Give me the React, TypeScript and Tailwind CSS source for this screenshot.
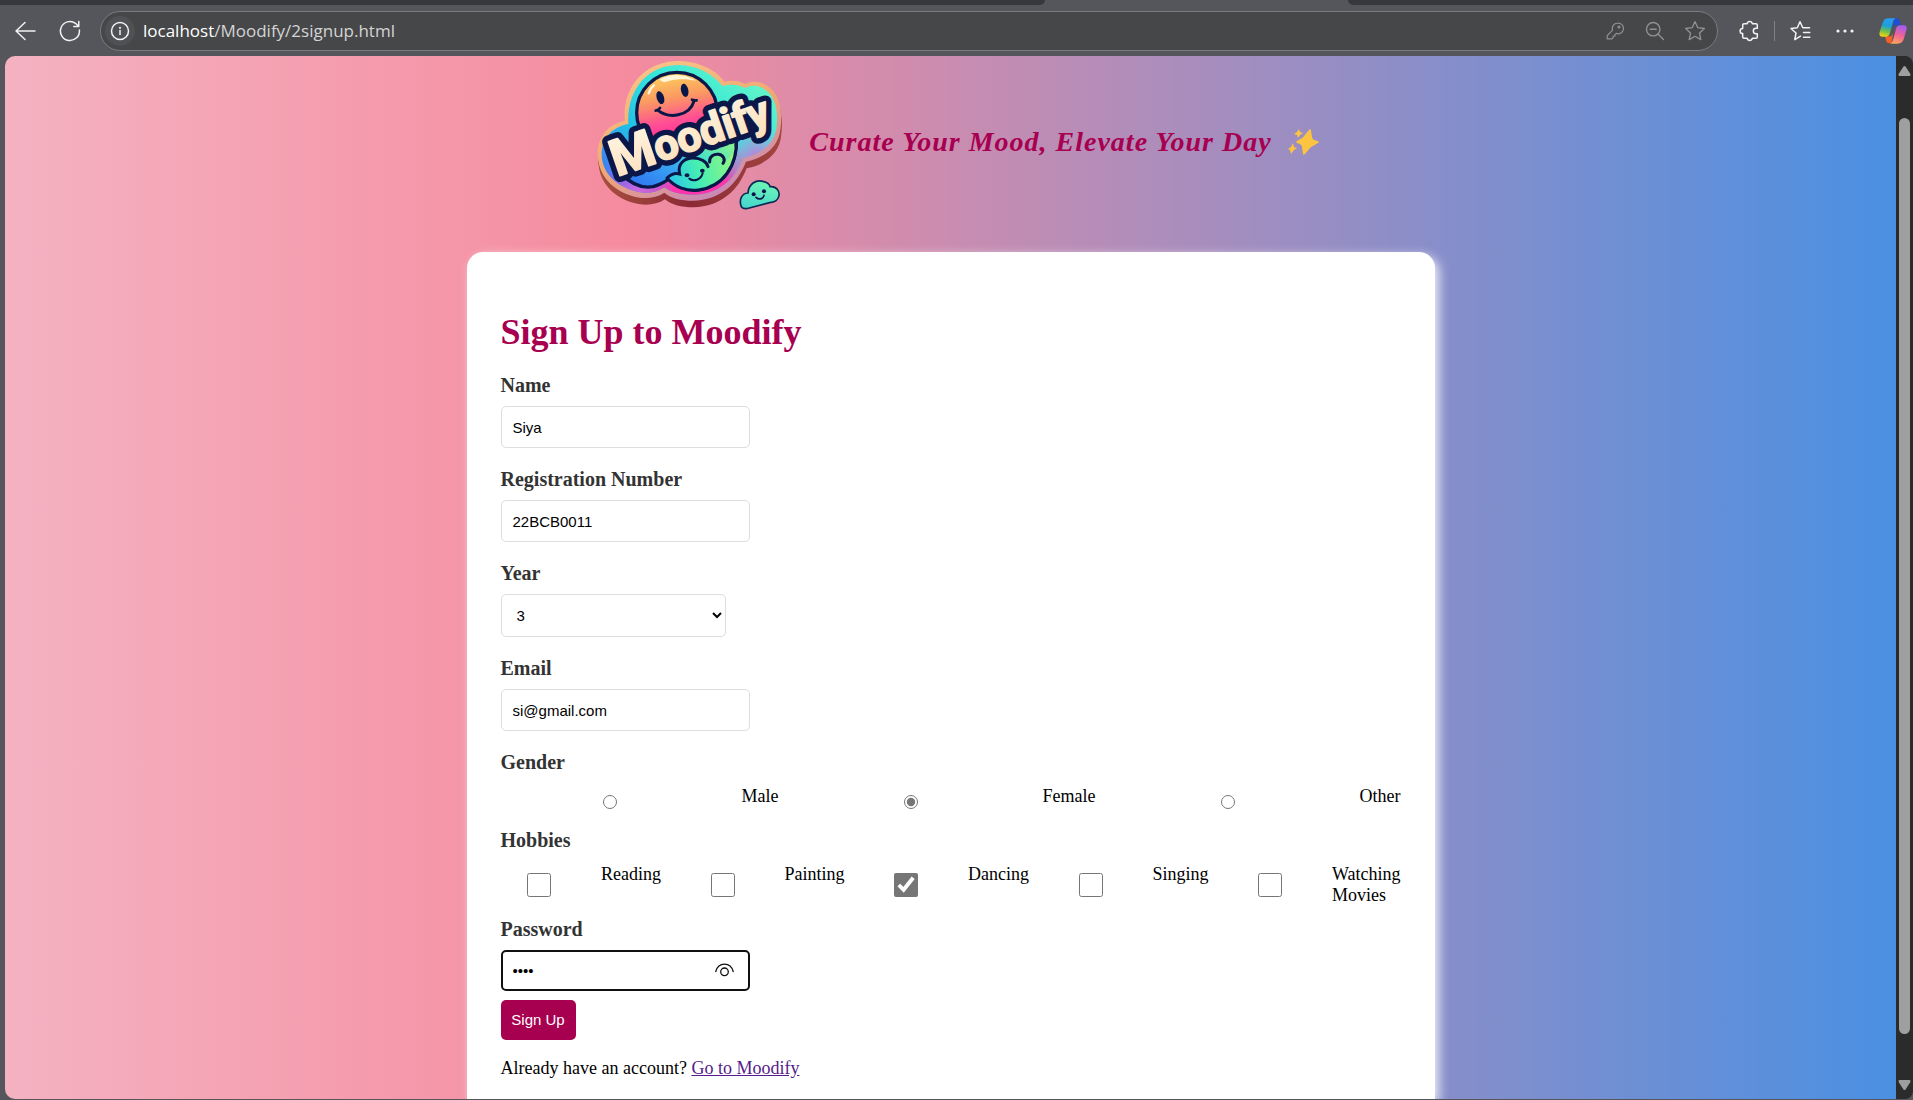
import React from "react";

function MoodifyLogo() {
  const outline =
    "M130 213C125 110 190 33 295 33C360 35 410 65 430 95C455 90 475 92 492 102C520 88 550 97 572 118C598 145 605 190 598 240C592 290 550 325 495 335C470 400 420 450 335 452C300 452 270 445 250 428C225 445 190 448 160 440C100 425 50 380 50 310C50 260 85 220 130 213Z";
  const inner =
    "M142 222C137 118 200 45 294 45C352 46 400 76 424 108C450 101 474 104 492 114C518 100 544 110 562 127C586 152 592 192 586 236C578 282 540 314 486 324C462 390 412 434 335 434C302 434 272 428 250 412C222 430 192 432 164 424C108 408 62 370 62 312C62 266 94 230 142 222Z";
  return (
    <svg viewBox="0 18 660 492" className="h-[164px] w-[220px] shrink-0" role="img" aria-label="Moodify logo">
      <defs>
        <linearGradient id="rim" x1="0" y1="0" x2="0.6" y2="1">
          <stop offset="0" stopColor="#fbcb8c" />
          <stop offset="0.6" stopColor="#f0a873" />
          <stop offset="1" stopColor="#c987b8" />
        </linearGradient>
        <linearGradient id="side" x1="0" y1="0" x2="1" y2="0">
          <stop offset="0" stopColor="#a8503f" />
          <stop offset="0.5" stopColor="#8b2a35" />
          <stop offset="1" stopColor="#a2463f" />
        </linearGradient>
        <linearGradient id="base" x1="0.1" y1="0.9" x2="0.9" y2="0.1">
          <stop offset="0" stopColor="#3f7df0" />
          <stop offset="0.3" stopColor="#22bfe6" />
          <stop offset="0.6" stopColor="#30e3dc" />
          <stop offset="1" stopColor="#66f7c6" />
        </linearGradient>
        <radialGradient id="pink" gradientUnits="userSpaceOnUse" cx="360" cy="440" r="190">
          <stop offset="0.45" stopColor="#ff36ab" />
          <stop offset="1" stopColor="#ff5fb4" stopOpacity="0" />
        </radialGradient>
        <radialGradient id="violet" gradientUnits="userSpaceOnUse" cx="170" cy="430" r="130">
          <stop offset="0.1" stopColor="#c56ae0" />
          <stop offset="0.6" stopColor="#7f63ec" />
          <stop offset="1" stopColor="#5f8af0" stopOpacity="0" />
        </radialGradient>
        <radialGradient id="lilac" gradientUnits="userSpaceOnUse" cx="530" cy="330" r="110">
          <stop offset="0.1" stopColor="#c778dc" />
          <stop offset="1" stopColor="#9fb3e0" stopOpacity="0" />
        </radialGradient>
        <linearGradient id="sun" x1="0.4" y1="0" x2="0.55" y2="0.8">
          <stop offset="0" stopColor="#fbd25a" />
          <stop offset="0.4" stopColor="#fb9763" />
          <stop offset="0.75" stopColor="#ff4e95" />
          <stop offset="1" stopColor="#ff2f9c" />
        </linearGradient>
        <linearGradient id="wave" x1="0" y1="0.8" x2="1" y2="0.1">
          <stop offset="0" stopColor="#2f72f0" />
          <stop offset="0.4" stopColor="#38a4f2" />
          <stop offset="0.65" stopColor="#45e0c8" />
          <stop offset="1" stopColor="#93f589" />
        </linearGradient>
        <linearGradient id="leaf" x1="0" y1="0.5" x2="1" y2="0.3">
          <stop offset="0" stopColor="#2cc9e6" />
          <stop offset="0.4" stopColor="#45efb2" />
          <stop offset="1" stopColor="#9df57c" />
        </linearGradient>
        <linearGradient id="cream" x1="0" y1="0" x2="0" y2="1">
          <stop offset="0" stopColor="#fff6e4" />
          <stop offset="1" stopColor="#fbdfba" />
        </linearGradient>
        <linearGradient id="puff" x1="0.6" y1="0" x2="0.3" y2="1">
          <stop offset="0" stopColor="#6ff5b4" />
          <stop offset="1" stopColor="#45d6cf" />
        </linearGradient>
      </defs>
      <path d={outline} transform="translate(2 20)" fill="url(#side)" />
      <path d={outline} transform="translate(1 10)" fill="url(#side)" />
      <path d={outline} fill="url(#rim)" />
      <path d={inner} fill="url(#base)" />
      <path d={inner} fill="url(#lilac)" />
      <path d={inner} fill="url(#violet)" />
      <path d={inner} fill="url(#pink)" />
      <circle cx="288" cy="188" r="121" fill="url(#sun)" stroke="#0b1749" strokeWidth="10" />
      <path d="M236 88C262 72 305 68 346 92C322 88 290 84 262 94C248 99 240 96 236 88Z" fill="#fff3d8" />
      <path d="M203 130C206 119 212 111 219 106" stroke="#fff3d8" strokeWidth="7" strokeLinecap="round" fill="none" />
      <ellipse cx="238" cy="143" rx="11" ry="20" transform="rotate(-18 238 143)" fill="#0b1749" />
      <ellipse cx="311" cy="121" rx="11" ry="20" transform="rotate(-12 311 121)" fill="#0b1749" />
      <path d="M231 181C262 206 325 202 340 151" stroke="#0b1749" strokeWidth="9" strokeLinecap="round" fill="none" />
      <path d="M224 182C230 181 234 178 237 174M333 149C338 151 343 152 347 151" stroke="#0b1749" strokeWidth="8" strokeLinecap="round" />
      <path
        d="M122 372C150 402 180 416 216 410C244 402 258 392 272 380C290 410 320 424 350 420C425 410 470 350 466 262L300 270L130 340Z"
        fill="url(#wave)"
        stroke="#0b1749"
        strokeWidth="10"
        strokeLinejoin="round"
      />
      <path
        d="M260 384C272 372 284 368 296 370C288 340 312 324 336 324C362 324 378 338 382 352C376 330 388 313 408 313C424 313 434 325 430 336C450 325 461 300 466 268C470 340 430 412 352 421C315 424 280 408 260 384Z"
        fill="url(#leaf)"
      />
      <path
        d="M258 384C270 373 284 368 296 372C288 340 312 324 336 324C360 324 377 336 381 350M386 336C384 318 400 311 413 313C428 316 434 330 426 340M258 384C282 412 318 425 352 420C425 410 470 350 466 262"
        fill="none"
        stroke="#0b1749"
        strokeWidth="9"
        strokeLinecap="round"
      />
      <ellipse cx="318" cy="376" rx="7" ry="6" fill="#0b1749" />
      <ellipse cx="364" cy="362" rx="7" ry="6" fill="#0b1749" />
      <path d="M325 386C338 396 360 390 365 370" stroke="#0b1749" strokeWidth="6" strokeLinecap="round" fill="none" />
      <g transform="translate(108 380) rotate(-19)" fontFamily="Roboto, 'Liberation Sans', sans-serif" fontWeight="700">
        <text fontSize="128" fill="#0b1749" stroke="#0b1749" strokeWidth="38" strokeLinejoin="round">
          <tspan fontSize="152">M</tspan>oodify
        </text>
        <text fontSize="128" fill="url(#cream)" stroke="url(#cream)" strokeWidth="5" strokeLinejoin="round">
          <tspan fontSize="152">M</tspan>oodify
        </text>
      </g>
      <path
        d="M481 470C473 450 482 430 501 429C503 402 525 388 546 394C560 397 566 404 567 410C587 408 598 425 593 440C590 452 580 457 566 458L505 474C495 477 486 477 481 470Z"
        fill="url(#puff)"
        stroke="#0d2a55"
        strokeWidth="5"
      />
      <circle cx="518" cy="433" r="6" fill="#0b1749" />
      <circle cx="549" cy="424" r="6" fill="#0b1749" />
      <path d="M525 442C533 450 546 448 549 436" stroke="#0b1749" strokeWidth="5" strokeLinecap="round" fill="none" />
    </svg>
  );
}

function Sparkles() {
  return (
    <svg viewBox="0 0 32 28" className="h-7 w-8 shrink-0" fill="#fdc43f" role="img" aria-label="sparkles">
      <path d="M22 1C23 1 23 2 23 3L24 9C24 10 25 11 26 12L30 13C31 14 31 15 30 15L25 18C24 18 23 19 22 20L17 26C16 27 15 27 15 26L14 19C14 18 13 17 12 16L9 15C8 14 8 13 9 13L14 10C15 9 16 9 16 8L21 2Z" />
      <path d="M11 1L12 4L15 5L12 7L10 10L9 7L6 6L9 4Z" />
      <path d="M5 15L6 19L9 20L6 22L3 26L2 22L0 21L3 19Z" />
    </svg>
  );
}

function CopilotIcon() {
  return (
    <svg viewBox="0 0 84 78" className="h-[26px] w-7" aria-hidden="true">
      <defs>
        <linearGradient id="cpL" x1="0.5" y1="0" x2="0.3" y2="1">
          <stop offset="0" stopColor="#2a9cf0" />
          <stop offset="0.4" stopColor="#1c9fd8" />
          <stop offset="0.7" stopColor="#6cc04a" />
          <stop offset="1" stopColor="#f5d413" />
        </linearGradient>
        <linearGradient id="cpR" x1="0.6" y1="0" x2="0.3" y2="1">
          <stop offset="0" stopColor="#a45cf0" />
          <stop offset="0.5" stopColor="#f0629a" />
          <stop offset="1" stopColor="#fba55c" />
        </linearGradient>
      </defs>
      <path d="M44 1H52C60 1 62 6 63 12L66 22H52C46 22 44 26 42 32Z" fill="#1d4fd0" />
      <path d="M38 76H32C24 76 22 72 21 66L18 55H32C38 55 40 50 42 44Z" fill="#f4602a" />
      <path d="M28 1H50C45 3 43 8 41 15L33 45C31 52 27 56 20 56H10C2 56 0 50 2 42L11 14C14 5 19 1 28 1Z" fill="url(#cpL)" />
      <path d="M56 77H34C39 75 41 70 43 63L51 33C53 26 57 22 64 22H74C82 22 85 28 82 36L74 64C71 73 65 77 56 77Z" fill="url(#cpR)" />
    </svg>
  );
}

const iconBtn = "flex shrink-0 items-center justify-center text-[#f2f2f2]";

function BrowserBar() {
  return (
    <header className="shrink-0 bg-[#55565b]">
      <div className="flex h-[5px]">
        <div className="w-[1045px] rounded-br-lg bg-[#37383d]" />
        <div className="w-[303px]" />
        <div className="flex-1 rounded-bl-lg bg-[#37383d]" />
      </div>
      <div className="flex h-[51px] items-center pl-3 font-['Open_Sans',sans-serif]">
        <button aria-label="Back" className={`${iconBtn} h-8 w-[26px]`}>
          <svg width="24" height="24" viewBox="0 0 24 24" fill="none" stroke="currentColor" strokeWidth="1.5" strokeLinecap="round" strokeLinejoin="round">
            <path d="M22 12H3M12 3.5L3 12L12 20.5" />
          </svg>
        </button>
        <button aria-label="Refresh" className={`${iconBtn} ml-5 h-8 w-6`}>
          <svg width="24" height="24" viewBox="0 0 24 24" fill="none" stroke="currentColor" strokeWidth="1.5" strokeLinecap="round" strokeLinejoin="round">
            <path d="M21.4 11A9.5 9.5 0 1 1 17.5 4.3L20.6 7.3M20.8 2.5V7.5H15.8" />
          </svg>
        </button>
        <div className="ml-[18px] flex h-10 flex-1 items-center rounded-full border border-[#7b7c80] bg-[#464749] pr-[10px] pl-1">
          <button aria-label="Site information" className={`${iconBtn} size-[30px] rounded-full bg-[#505154]`}>
            <svg width="20" height="20" viewBox="0 0 20 20" fill="none" stroke="currentColor" strokeWidth="1.5" strokeLinecap="round">
              <circle cx="10" cy="10" r="8.5" />
              <path d="M10 9.5V13.5" />
              <circle cx="10" cy="6.8" r="0.4" fill="currentColor" />
            </svg>
          </button>
          <div className="ml-2 flex-1 text-[17px] leading-6 text-[#d4d4d4]">
            <span className="text-white">localhost</span>/Moodify/2signup.html
          </div>
          <div className="flex items-center gap-4 text-[#909194]">
            <button aria-label="Saved passwords" className="flex size-6 items-center justify-center">
              <svg width="18" height="18" viewBox="0 0 18 18" fill="none" stroke="currentColor" strokeWidth="1.2" strokeLinejoin="round">
                <path d="M11.5 1.2A5.3 5.3 0 1 1 10.3 11.4L9 12.7V14H7.2V15.6L6 16.9H1.2V13.6L6.6 8.2A5.3 5.3 0 0 1 11.5 1.2Z" />
                <circle cx="13" cy="5" r="1" />
              </svg>
            </button>
            <button aria-label="Zoom out" className="flex size-6 items-center justify-center">
              <svg width="20" height="20" viewBox="0 0 20 20" fill="none" stroke="currentColor" strokeWidth="1.4" strokeLinecap="round">
                <circle cx="8.2" cy="8.2" r="6.7" />
                <path d="M13 13L18.5 18.5M5.2 8.2H11.2" />
              </svg>
            </button>
            <button aria-label="Add to favorites" className="flex size-6 items-center justify-center">
              <svg width="22" height="22" viewBox="0 0 22 22" fill="none" stroke="currentColor" strokeWidth="1.3" strokeLinejoin="round">
                <path d="M11 1.6L13.8 7.7L20.4 8.5L15.5 13L16.8 19.6L11 16.3L5.2 19.6L6.5 13L1.6 8.5L8.2 7.7Z" />
              </svg>
            </button>
          </div>
        </div>
        <div className="flex items-center pl-5">
          <button aria-label="Extensions" className={`${iconBtn} size-6`}>
            <svg width="22" height="22" viewBox="0 0 22 22" fill="none" stroke="currentColor" strokeWidth="1.5" strokeLinejoin="round">
              <path d="M8.2 3.7A2.6 2.6 0 0 1 13.3 3.7H17A1.3 1.3 0 0 1 18.3 5V8.3H17A2.7 2.7 0 0 0 17 13.7H18.3V17A1.3 1.3 0 0 1 17 18.3H13.3A2.6 2.6 0 0 1 8.2 18.3H5A1.3 1.3 0 0 1 3.7 17V13.6A2.6 2.6 0 0 1 3.7 8.4V5A1.3 1.3 0 0 1 5 3.7Z" />
            </svg>
          </button>
          <span className="ml-3 h-5 w-px bg-[#7f8084]" />
          <button aria-label="Favorites" className={`${iconBtn} ml-[11px] size-7`}>
            <svg width="22" height="22" viewBox="0 0 22 22" fill="none" stroke="currentColor" strokeWidth="1.5" strokeLinecap="round" strokeLinejoin="round">
              <path d="M11.5 16.2L5.8 19.6L7 13L2 8.5L8.3 7.7L11 1.8L13.8 7.7H20.5M14.5 12.5H20.8M14.5 17.3H20.8" />
            </svg>
          </button>
          <button aria-label="Settings and more" className={`${iconBtn} ml-[19px] size-6`}>
            <svg width="18" height="4" viewBox="0 0 18 4" fill="currentColor">
              <circle cx="2" cy="2" r="1.6" />
              <circle cx="9" cy="2" r="1.6" />
              <circle cx="16" cy="2" r="1.6" />
            </svg>
          </button>
          <button aria-label="Copilot" className={`${iconBtn} mr-[6px] ml-[22px]`}>
            <CopilotIcon />
          </button>
        </div>
      </div>
    </header>
  );
}

function Scrollbar() {
  return (
    <aside aria-label="Scroll bar" className="flex w-[17px] shrink-0 flex-col items-center rounded-r-lg bg-[#2b2b2b] pt-[9px] pb-2">
      <button aria-label="Scroll up" className="text-[#9f9f9f]">
        <svg width="13" height="12" viewBox="0 0 13 12" fill="currentColor">
          <path d="M5.3 1.8Q6.5 0 7.7 1.8L12.4 9Q13 11 11.4 11H1.6Q0 11 .6 9Z" />
        </svg>
      </button>
      <div className="flex w-full flex-1 flex-col items-center pt-[41px] pb-[45px]">
        <div className="w-[11px] flex-1 rounded-full bg-[#9f9f9f]" />
      </div>
      <button aria-label="Scroll down" className="text-[#9f9f9f]">
        <svg width="13" height="12" viewBox="0 0 13 12" fill="currentColor">
          <path d="M5.3 10.2Q6.5 12 7.7 10.2L12.4 3Q13 1 11.4 1H1.6Q0 1 .6 3Z" />
        </svg>
      </button>
    </aside>
  );
}

const labelCls = "block text-[20px] leading-[23px] font-bold text-[#333333]";
const fieldCls =
  "block h-[42px] w-[249px] rounded-[5px] border border-[#dddddd] bg-white px-[11px] font-['Liberation_Sans',sans-serif] text-[15px] text-black outline-none";

function TextField(props: { id: string; label: string; value: string; type: string }) {
  return (
    <div className="mb-5">
      <label htmlFor={props.id} className={labelCls}>
        {props.label}
      </label>
      <input id={props.id} type={props.type} defaultValue={props.value} className={`${fieldCls} mt-[9px]`} />
    </div>
  );
}

function SignUpForm() {
  return (
    <form className="w-full max-w-[968px] flex-1 rounded-t-2xl bg-white px-[34px] pt-[60px] shadow-[4px_4px_11px_rgba(255,255,255,0.85)]" onSubmit={(e) => e.preventDefault()}>
      <h1 className="mb-[21px] text-[36px] leading-[41px] font-bold text-[#a80050]">Sign Up to Moodify</h1>
      <TextField id="name" label="Name" value="Siya" type="text" />
      <TextField id="regno" label="Registration Number" value="22BCB0011" type="text" />
      <div className="mb-5">
        <label htmlFor="year" className={labelCls}>
          Year
        </label>
        <select
          id="year"
          defaultValue="3"
          className="mt-[9px] block h-[43px] w-[225px] rounded-[5px] border border-[#dddddd] bg-white px-[11px] font-['Liberation_Sans',sans-serif] text-[15px] text-black"
        >
          <option>1</option>
          <option>2</option>
          <option>3</option>
          <option>4</option>
        </select>
      </div>
      <TextField id="email" label="Email" value="si@gmail.com" type="email" />
      <fieldset>
        <legend className={labelCls}>Gender</legend>
        <div className="mt-3 flex gap-[23px] pb-5 text-[18px] leading-5">
          {["Male", "Female", "Other"].map((g) => (
            <React.Fragment key={g}>
              <span className="flex flex-1 justify-center pt-[9px]">
                <input id={g} type="radio" name="gender" defaultChecked={g === "Female"} className="size-[14px] accent-[#767676]" />
              </span>
              <label htmlFor={g}>{g}</label>
            </React.Fragment>
          ))}
        </div>
      </fieldset>
      <fieldset>
        <legend className={labelCls}>Hobbies</legend>
        <div className="mt-3 flex gap-[23px] pb-3 text-[18px] leading-[21px]">
          {["Reading", "Painting", "Dancing", "Singing", "Watching Movies"].map((h) => (
            <React.Fragment key={h}>
              <span className="flex flex-1 justify-center pt-[9px]">
                <input id={h} type="checkbox" defaultChecked={h === "Dancing"} className="size-6 accent-[#767676]" />
              </span>
              <label htmlFor={h} className="w-min">
                {h}
              </label>
            </React.Fragment>
          ))}
        </div>
      </fieldset>
      <label htmlFor="password" className={labelCls}>
        Password
      </label>
      <div className="relative mt-[9px] w-[249px]">
        <input
          id="password"
          type="password"
          defaultValue="siya"
          className="block h-[41px] w-full rounded-[5px] border-2 border-[#101010] bg-white px-[10px] font-['Liberation_Sans',sans-serif] text-[15px] text-black outline-none"
        />
        <button type="button" aria-label="Show password" className="absolute top-3 right-4 text-[#101010]">
          <svg width="19" height="16" viewBox="0 0 19 16" fill="none" stroke="currentColor" strokeWidth="1.3" strokeLinecap="round">
            <path d="M.8 9.5C2 5 5.5 2.2 9.5 2.2S17 5 18.2 9.5" />
            <circle cx="9.5" cy="9.8" r="3.8" />
          </svg>
        </button>
      </div>
      <button type="submit" className="mt-[9px] block h-10 w-[75px] rounded-[5px] bg-[#a80050] font-['Liberation_Sans',sans-serif] text-[15px] text-white">
        Sign Up
      </button>
      <p className="mt-[18px] text-[18px] leading-5 text-black">
        Already have an account?{" "}
        <a href="#moodify" className="text-[#551a8b] underline">
          Go to Moodify
        </a>
      </p>
    </form>
  );
}

export default function App() {
  return (
    <div className="flex h-screen flex-col overflow-hidden bg-[#55565b] font-['Liberation_Serif',serif]">
      <BrowserBar />
      <div className="mb-px ml-[5px] flex min-h-0 flex-1">
        <main className="flex min-w-0 flex-1 flex-col items-center overflow-hidden rounded-l-[10px] bg-[linear-gradient(to_right,#f4b2c1,#f58b9f_33%,#4a90e2)]">
          <div className="flex items-center gap-2 pb-8">
            <MoodifyLogo />
            <p className="flex items-center gap-4 pt-2 text-[28px] leading-8 font-bold whitespace-nowrap text-[#a80050] italic tracking-[1px]">
              Curate Your Mood, Elevate Your Day
              <Sparkles />
            </p>
          </div>
          <SignUpForm />
        </main>
        <Scrollbar />
      </div>
    </div>
  );
}
